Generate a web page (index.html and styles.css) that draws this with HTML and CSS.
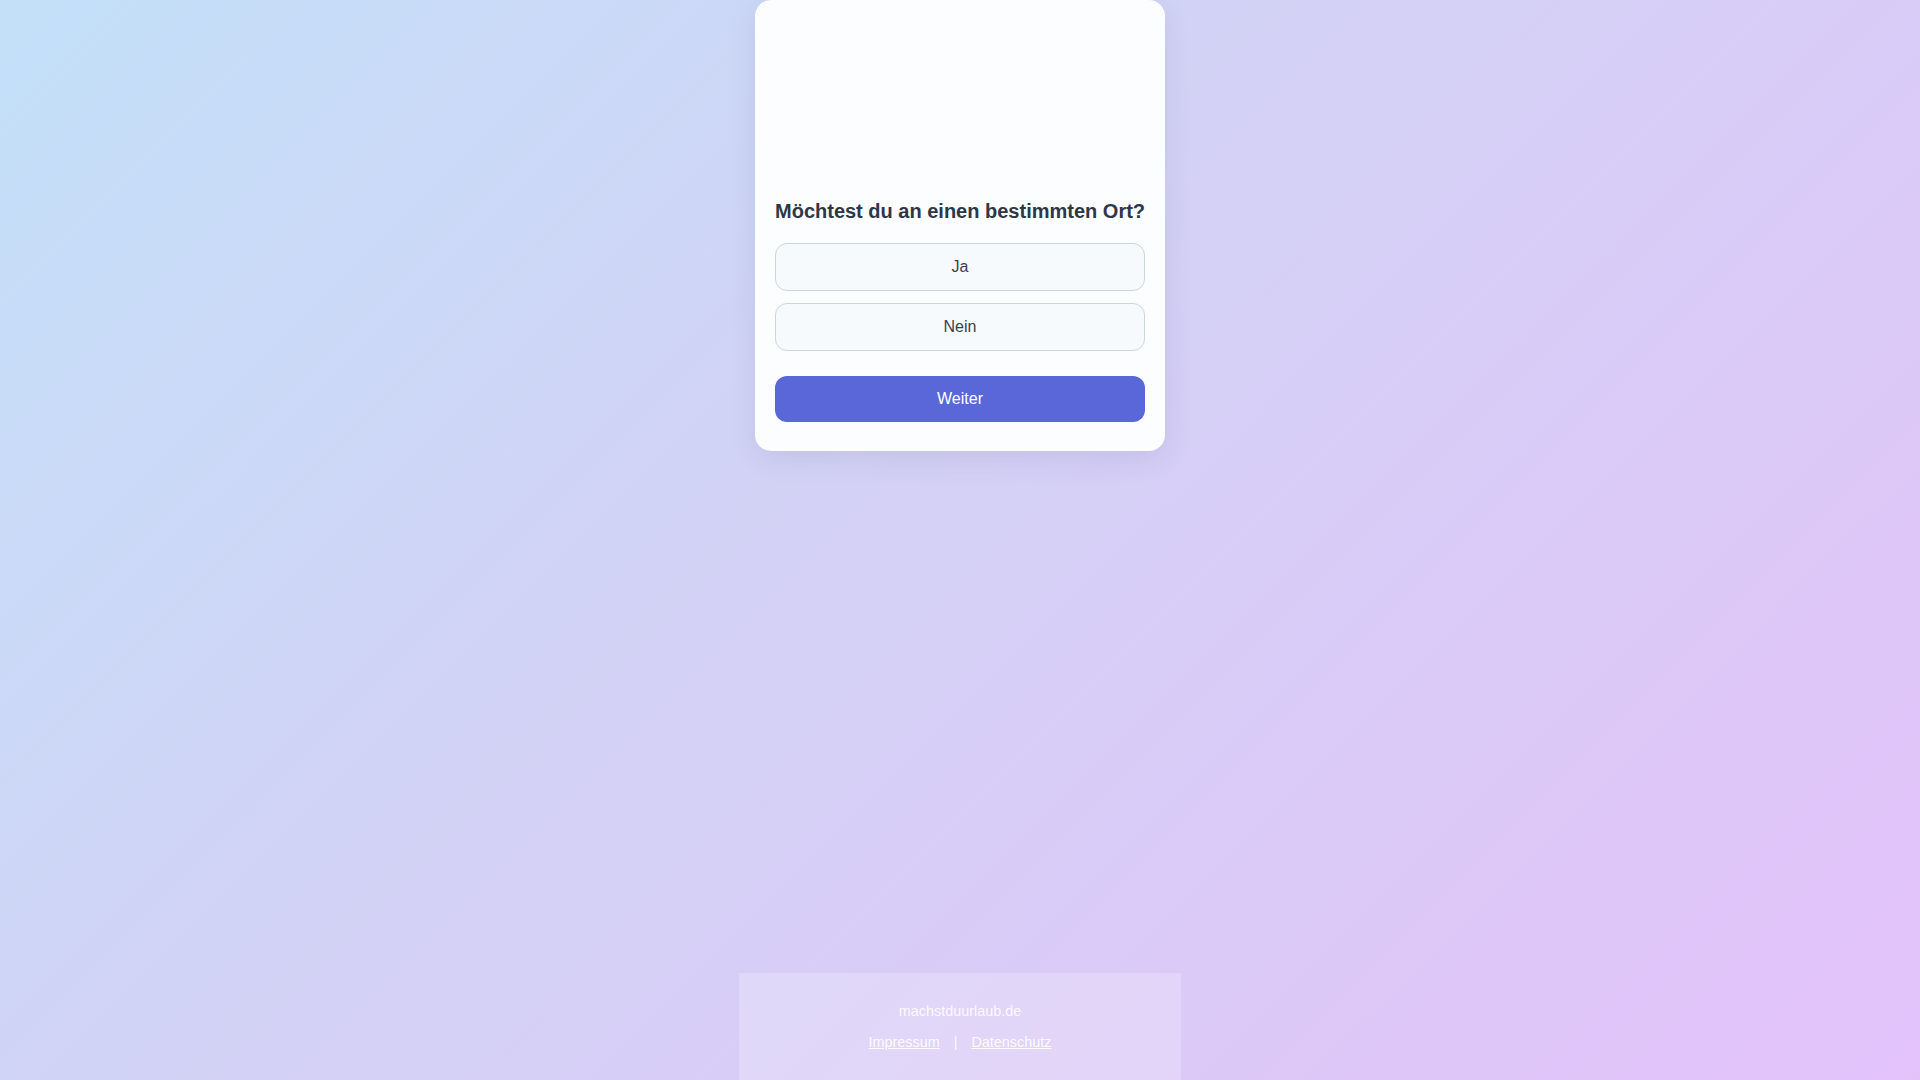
FILE: index.html
```html
<!DOCTYPE html>
<html lang="de">
<head>
<meta charset="utf-8">
<title>machstduurlaub.de</title>
<link rel="stylesheet" href="styles.css">
</head>
<body>
<div class="page">
  <main class="card">
    <div class="card-media"></div>
    <h1 class="question">Möchtest du an einen bestimmten Ort?</h1>
    <div class="options">
      <button class="option">Ja</button>
      <button class="option">Nein</button>
    </div>
    <button class="next">Weiter</button>
  </main>
  <footer class="footer">
    <div class="site">machstduurlaub.de</div>
    <div class="links">
      <a href="#">Impressum</a>
      <span class="sep">|</span>
      <a href="#">Datenschutz</a>
    </div>
  </footer>
</div>
</body>
</html>
```

FILE: styles.css
```css
html, body {
  margin: 0;
  padding: 0;
  height: 100%;
}
body {
  font-family: "Liberation Sans", Arial, sans-serif;
  background: linear-gradient(135deg, #c3e0f9 0%, #d3d1f5 45%, #e3c2fa 100%);
  background-attachment: fixed;
  overflow: hidden;
}
.page {
  min-height: 100vh;
  display: flex;
  flex-direction: column;
  align-items: center;
}
.card {
  width: 410px;
  box-sizing: border-box;
  background: #fcfdff;
  border-radius: 16px;
  padding: 20px 20px 29px;
  box-shadow: 0 8px 28px rgba(60, 60, 120, 0.10);
  display: flex;
  flex-direction: column;
}
.card-media {
  height: 159px;
  margin-bottom: 20px;
}
.question {
  margin: 0 0 20px;
  font-size: 20px;
  line-height: 24px;
  font-weight: 700;
  color: #2d3748;
  text-align: center;
  white-space: nowrap;
}
.options {
  display: flex;
  flex-direction: column;
  gap: 12px;
}
.option {
  height: 48px;
  border: 1px solid #cbd5e0;
  border-radius: 12px;
  background: #f7fafc;
  color: #374151;
  font-family: "Liberation Sans", Arial, sans-serif;
  font-size: 16px;
  cursor: pointer;
}
.next {
  margin-top: 25px;
  height: 46px;
  border: none;
  border-radius: 12px;
  background: #5a67d8;
  color: #ffffff;
  font-family: "Liberation Sans", Arial, sans-serif;
  font-size: 16px;
  cursor: pointer;
}
.footer {
  margin-top: auto;
  width: 442px;
  box-sizing: border-box;
  padding: 28px 20px 26px;
  background: rgba(255, 255, 255, 0.22);
  text-align: center;
  color: rgba(255, 255, 255, 0.88);
  font-size: 14.4px;
  line-height: 21.6px;
}
.links {
  margin-top: 10px;
}
.links a {
  color: rgba(255, 255, 255, 0.92);
  text-decoration: underline;
}
.sep {
  margin: 0 10px;
}
```
